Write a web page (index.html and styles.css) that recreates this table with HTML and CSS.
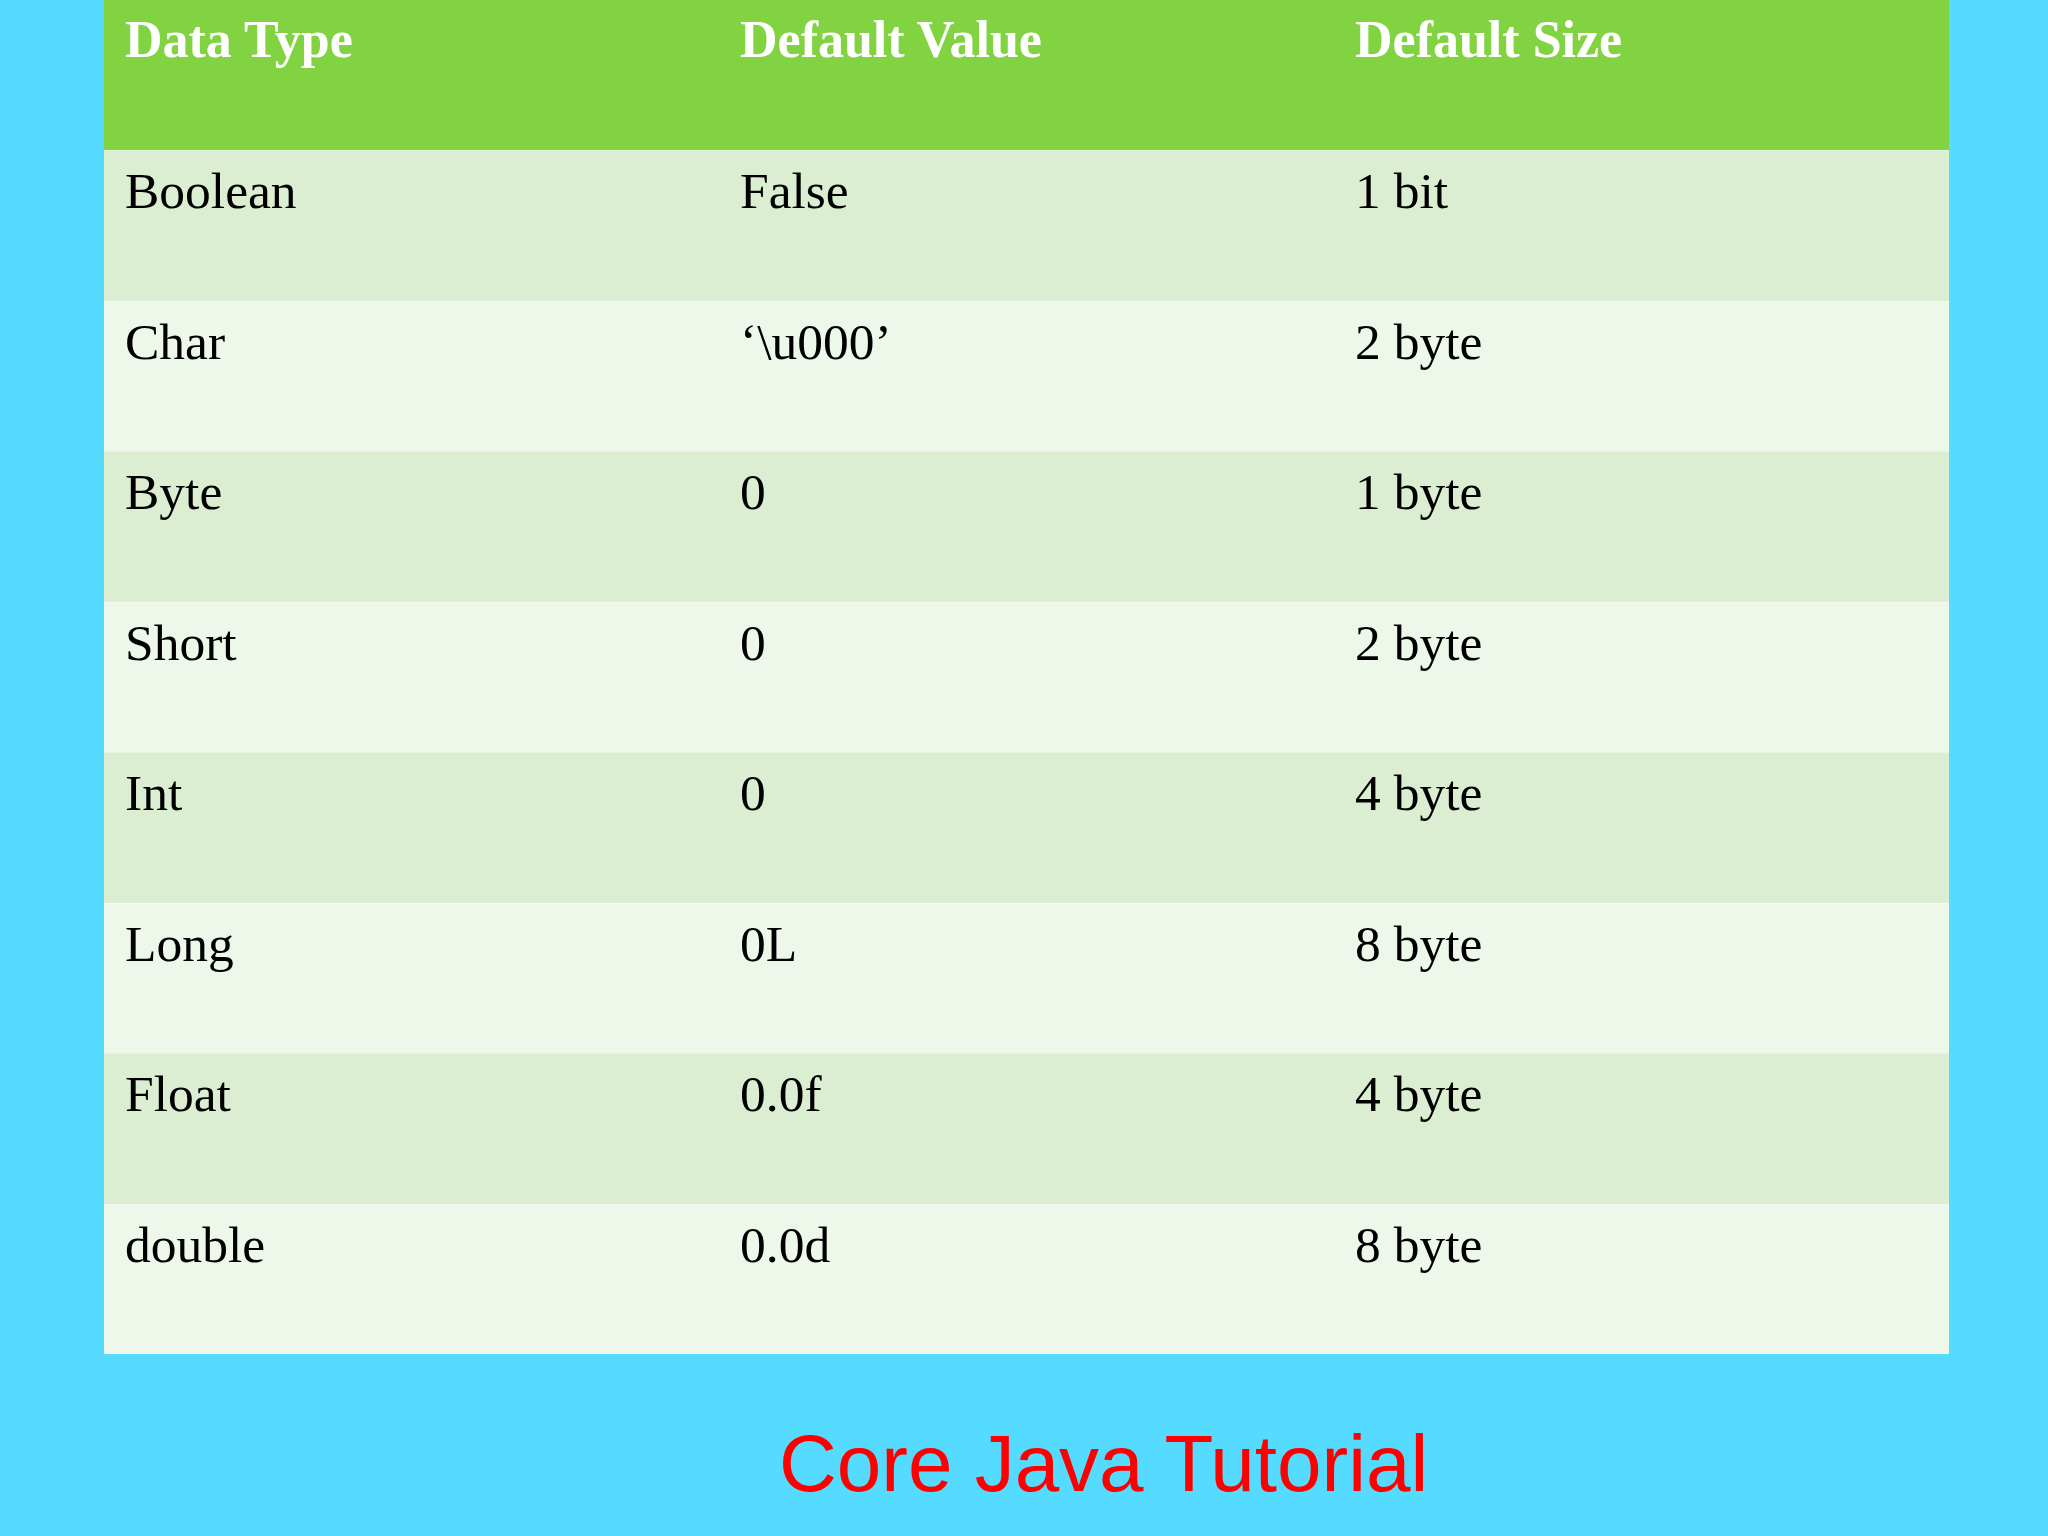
FILE: index.html
```html
<!DOCTYPE html>
<html lang="en">
<head>
<meta charset="utf-8">
<title>Core Java Tutorial</title>
<link rel="stylesheet" href="styles.css">
</head>
<body>
<main class="slide">
  <div class="table">
    <div class="row head">
      <div class="cell">Data Type</div>
      <div class="cell">Default Value</div>
      <div class="cell">Default Size</div>
    </div>
    <div class="row odd">
      <div class="cell">Boolean</div>
      <div class="cell">False</div>
      <div class="cell">1 bit</div>
    </div>
    <div class="row even">
      <div class="cell">Char</div>
      <div class="cell">‘\u000’</div>
      <div class="cell">2 byte</div>
    </div>
    <div class="row odd">
      <div class="cell">Byte</div>
      <div class="cell">0</div>
      <div class="cell">1 byte</div>
    </div>
    <div class="row even">
      <div class="cell">Short</div>
      <div class="cell">0</div>
      <div class="cell">2 byte</div>
    </div>
    <div class="row odd">
      <div class="cell">Int</div>
      <div class="cell">0</div>
      <div class="cell">4 byte</div>
    </div>
    <div class="row even">
      <div class="cell">Long</div>
      <div class="cell">0L</div>
      <div class="cell">8 byte</div>
    </div>
    <div class="row odd">
      <div class="cell">Float</div>
      <div class="cell">0.0f</div>
      <div class="cell">4 byte</div>
    </div>
    <div class="row even last">
      <div class="cell">double</div>
      <div class="cell">0.0d</div>
      <div class="cell">8 byte</div>
    </div>
  </div>
  <footer class="footer">
    <h1 class="title">Core Java Tutorial</h1>
  </footer>
</main>
</body>
</html>
```

FILE: styles.css
```css
html, body {
  margin: 0;
  padding: 0;
}

body {
  width: 2048px;
  height: 1536px;
  background: #54dbff;
  overflow: hidden;
}

.slide {
  display: flex;
  flex-direction: column;
}

.table {
  margin-left: 104px;
  width: 1845px;
  display: grid;
  grid-template-rows: 150px repeat(8, 150.56px);
  font-family: "Liberation Serif", "Times New Roman", serif;
  font-size: 51.5px;
}

.row {
  display: grid;
  grid-template-columns: repeat(3, 1fr);
  box-sizing: border-box;
}

.cell {
  padding: 10px 0 0 21px;
  line-height: normal;
}

.head {
  background: #82d341;
  color: #ffffff;
  font-weight: bold;
  font-size: 52px;
}

.odd {
  background: #dbeed1;
  color: #000000;
  border-top: 1px solid rgba(255, 255, 255, 0.35);
}

.even {
  background: #edf7ea;
  color: #000000;
  border-top: 1px solid rgba(255, 255, 255, 0.35);
}

.last {
  border-bottom: 1px solid rgba(255, 255, 255, 0.4);
}

.footer {
  margin-top: 64px;
  padding-left: 779px;
}

.title {
  margin: 0;
  font-family: "Liberation Sans", Arial, sans-serif;
  font-weight: normal;
  font-size: 80px;
  line-height: 92px;
  color: #ff0000;
}
```
